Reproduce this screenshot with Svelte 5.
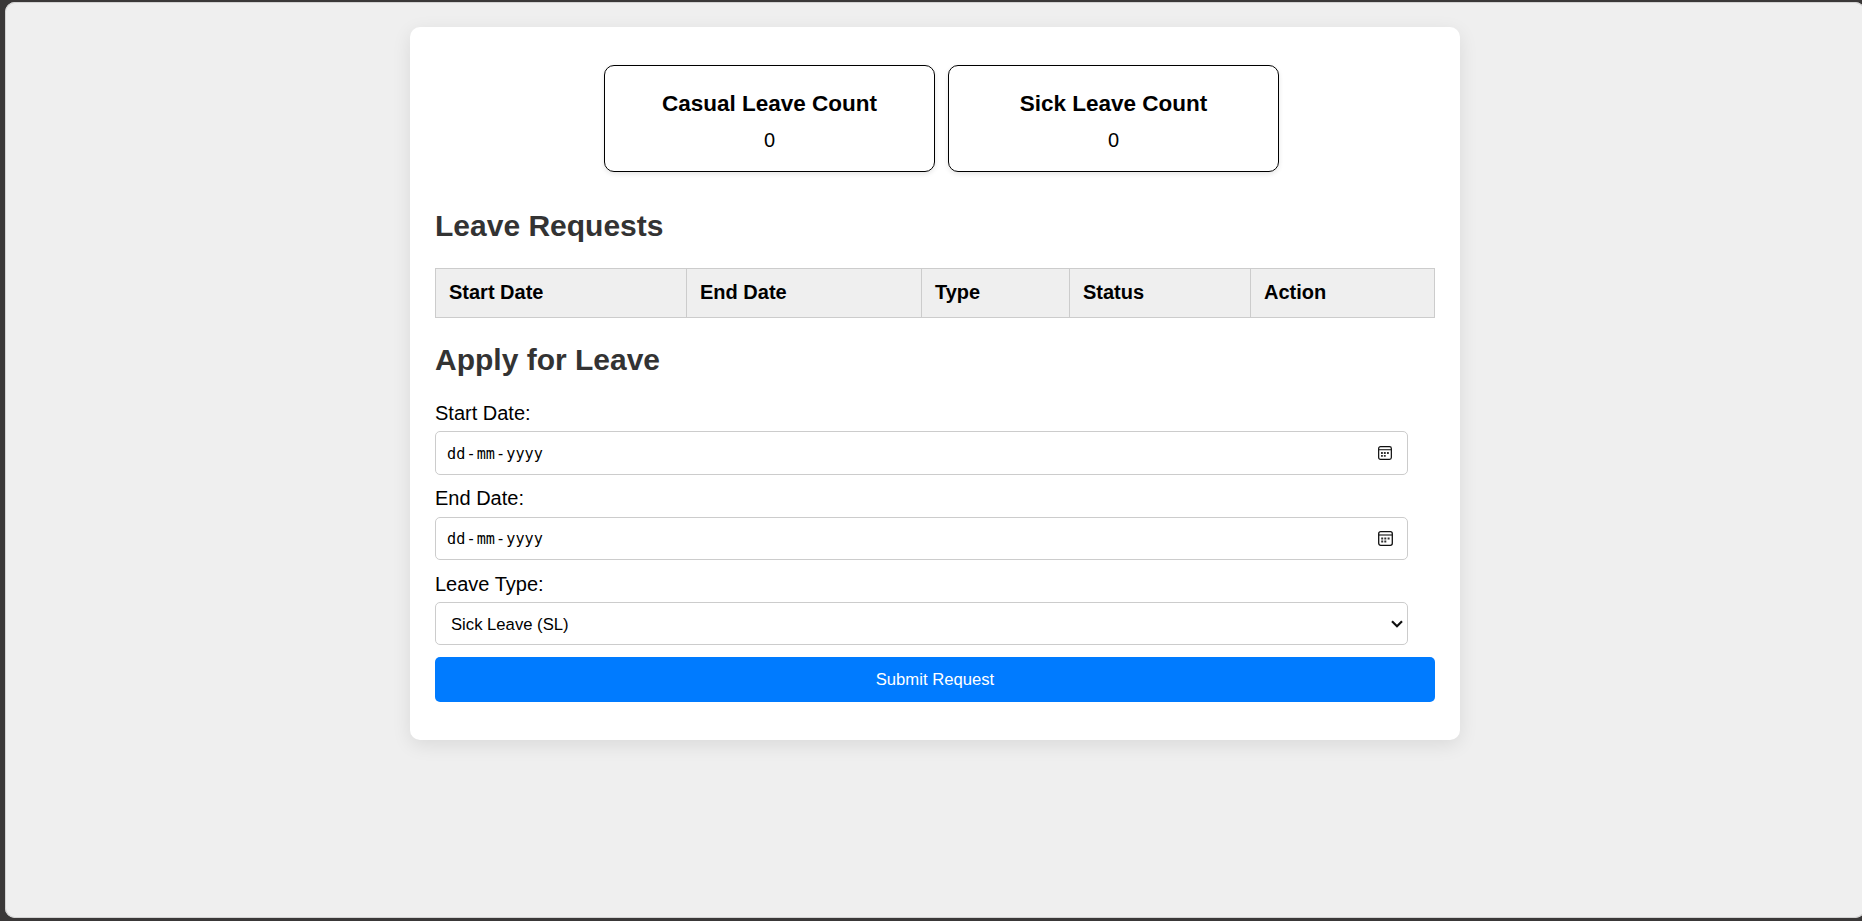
<script>
  const counts = [
    { title: 'Casual Leave Count', value: 0 },
    { title: 'Sick Leave Count', value: 0 }
  ];
  const columns = ['Start Date', 'End Date', 'Type', 'Status', 'Action'];
  const dates = ['Start Date:', 'End Date:'];
</script>

<div class="window">
  <div class="page">
    <main class="container">
      <div class="counts">
        {#each counts as c}
          <section class="count">
            <h3>{c.title}</h3>
            <p>{c.value}</p>
          </section>
        {/each}
      </div>

      <h2>Leave Requests</h2>
      <div class="table">
        {#each columns as col}
          <div class="th">{col}</div>
        {/each}
      </div>

      <h2 class="apply">Apply for Leave</h2>
      <div class="form">
        {#each dates as label, i}
          <div class="label" class:tight={i === 1}>{label}</div>
          <div class="field date" class:second={i === 1}>
            <span class="value"><span>dd</span><span>-</span><span>mm</span><span>-</span><span>yyyy</span></span>
            <svg class="calendar" viewBox="0 0 15 15" width={14 + i} height={14 + i}>
              <rect x="0.7" y="0.7" width="13.6" height="13.6" rx="2" fill="none" stroke="#101010" stroke-width="1.3" />
              <path d="M1 4h13" stroke="#101010" stroke-width="1.1" />
              <path d="M3.2 6.5h2v2h-2zM6.3 6.5h2v2h-2zM9.6 6.5h2v2h-2zM3.2 9.6h2v2h-2zM6.3 9.6h2v2h-2z" fill="#303030" />
            </svg>
          </div>
        {/each}
        <div class="label">Leave Type:</div>
        <div class="field select">
          <span>Sick Leave (SL)</span>
          <svg viewBox="0 0 12 8" width="12" height="8">
            <path d="M1 1.2l5 5 5-5" fill="none" stroke="#101010" stroke-width="2.2" />
          </svg>
        </div>
        <button>Submit Request</button>
      </div>
    </main>
  </div>
</div>

<style>
  :global(body) {
    margin: 0;
    background: #3a3838;
  }
  * {
    box-sizing: border-box;
  }
  .window {
    width: 100%;
    height: 921px;
    padding: 2px 0 3px 5px;
    overflow: hidden;
    background: #3a3838;
    font-family: 'Liberation Sans', Arial, sans-serif;
    font-size: 20px;
    color: #000;
  }
  .page {
    width: 1860px;
    height: 916px;
    padding: 25px 0 0 405px;
    border-radius: 10px;
    background: #efefef;
    box-shadow: inset 0 0 0 1px #d2d2d2;
  }
  .container {
    width: 1050px;
    height: 713px;
    padding: 38px 25px;
    border-radius: 10px;
    background: #fff;
    box-shadow: 0 5px 19px rgba(0, 0, 0, 0.09);
  }
  .counts {
    display: flex;
    gap: 13px;
    padding-left: 169px;
  }
  .count {
    width: 331px;
    height: 107px;
    border: 1px solid #000;
    border-radius: 10px;
    text-align: center;
    box-shadow: 0 2px 5px rgba(0, 0, 0, 0.1);
  }
  h3 {
    margin: 24px 0 0;
    font-size: 22.5px;
    line-height: 27px;
  }
  p {
    margin: 12px 0 0;
    line-height: 23px;
  }
  h2 {
    margin: 36px 0 0;
    font-size: 30px;
    line-height: 35px;
    color: #333;
  }
  .table {
    display: grid;
    grid-template-columns: 251px 235px 148px 181px 184px;
    width: 1000px;
    height: 50px;
    margin-top: 25px;
    border: 1px solid #ccc;
    background: #efefef;
  }
  .th {
    padding: 12px 12px 12px 13px;
    border-right: 1px solid #ccc;
    font-weight: bold;
    line-height: 23px;
  }
  .th:last-child {
    border-right: 0;
  }
  .apply {
    margin-top: 24px;
  }
  .form {
    padding-top: 25px;
  }
  .label {
    height: 29px;
    line-height: 23px;
  }
  .tight {
    line-height: 21px;
  }
  .field {
    display: flex;
    align-items: center;
    justify-content: space-between;
    width: 973px;
    height: 44px;
    margin-bottom: 13px;
    border: 1px solid #ccc;
    border-radius: 5px;
    font-size: 16.67px;
  }
  .date {
    padding: 0 15px 0 11px;
  }
  .second {
    height: 43px;
  }
  .second .calendar {
    margin-right: -1px;
  }
  .value {
    display: flex;
    gap: 1.1px;
    padding-top: 1px;
    font-family: 'DejaVu Sans Mono', monospace;
    font-size: 15.2px;
  }
  .select {
    height: 43px;
    margin-bottom: 12px;
    padding: 0 4px 0 15px;
  }
  .select span {
    padding-top: 2px;
  }
  button {
    display: block;
    width: 1000px;
    height: 45px;
    padding: 0;
    border: 0;
    border-radius: 5px;
    background: #007bff;
    color: #fff;
    font-family: inherit;
    font-size: 16.67px;
  }
</style>
